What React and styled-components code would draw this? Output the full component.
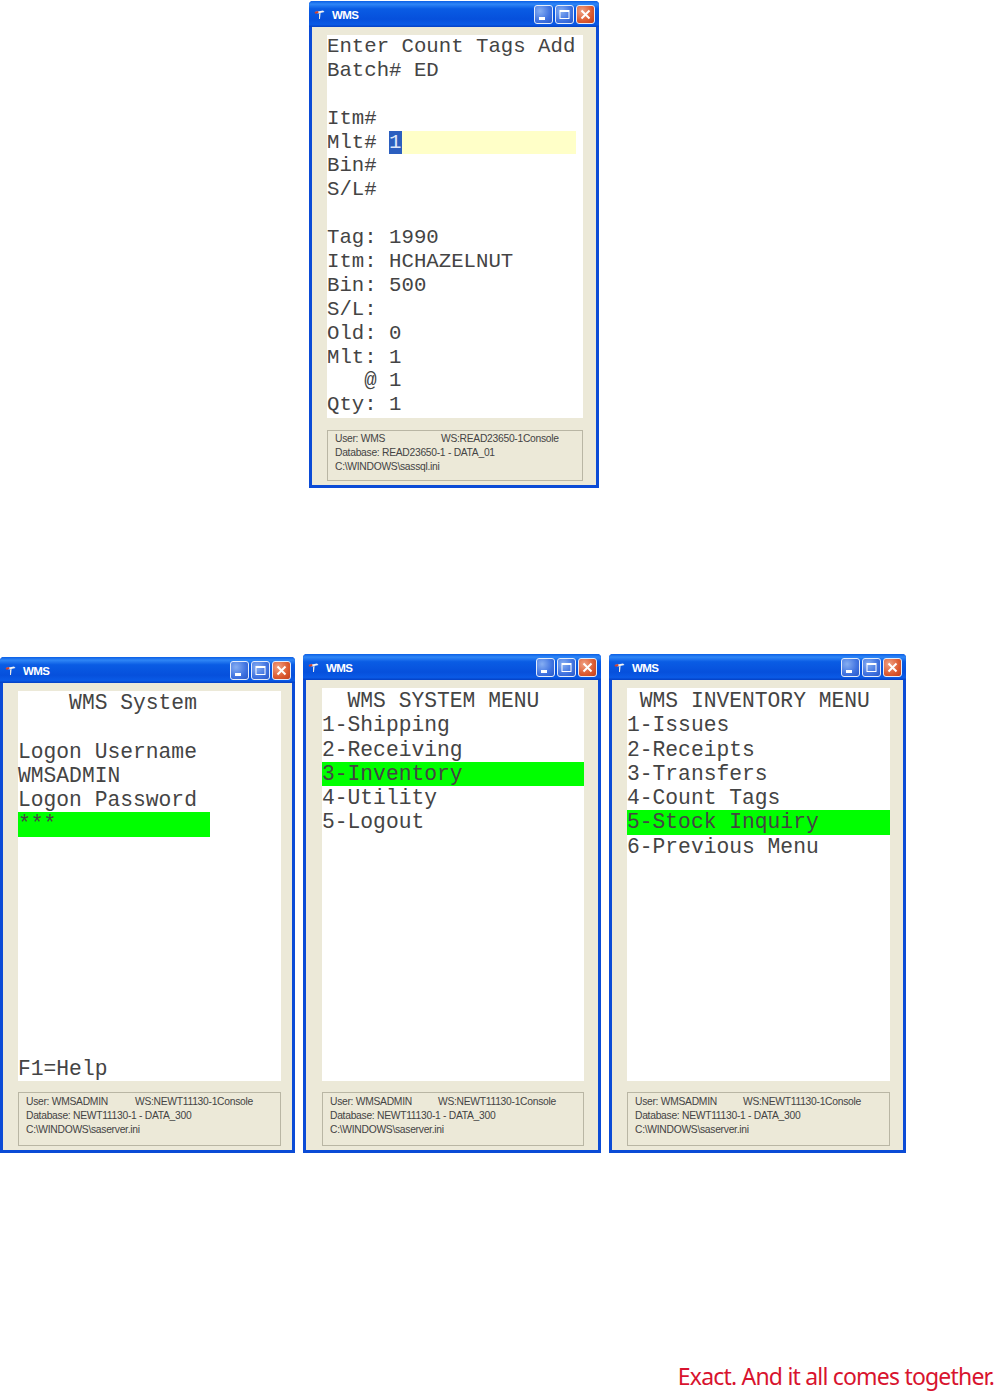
import styled, { createGlobalStyle } from 'styled-components'

const GlobalStyle = createGlobalStyle`
  html, body {
    margin: 0;
    padding: 0;
    background: #fff;
  }
`

const Page = styled.div`
  width: 1007px;
  height: 1397px;
  overflow: hidden;
  padding-top: 1px;
  box-sizing: border-box;
`

const TopRow = styled.div`
  padding-left: 309px;
`

const BottomRow = styled.div`
  display: flex;
  align-items: flex-end;
  gap: 8px;
  margin-top: 166px;
`

const Win = styled.section`
  box-sizing: border-box;
  width: ${({ $width }) => $width}px;
  display: flex;
  flex-direction: column;
  background: #ece9d8;
  border: 3px solid #0b4bd6;
  border-top: none;
  border-radius: 4px 4px 0 0;
`

const TitleBar = styled.header`
  height: 26px;
  margin: 0 -3px;
  display: flex;
  align-items: center;
  padding: 0 4px 0 4px;
  border-radius: 4px 4px 0 0;
  background: linear-gradient(180deg, #0a5fe6 0%, #2f86f6 12%, #0a5ce4 30%, #0650dc 70%, #0a5ae6 90%, #0440c4 100%);
`

const TitleIcon = styled.svg`
  width: 13px;
  height: 13px;
  margin-right: 6px;
  flex: none;
`

const TitleText = styled.span`
  flex: 1;
  font: bold 11.5px 'Liberation Sans', Arial, sans-serif;
  letter-spacing: -0.6px;
  color: #fff;
  padding-top: 2px;
`

const Ctl = styled.button`
  width: 19px;
  height: 19px;
  margin-left: 2px;
  padding: 0;
  display: flex;
  align-items: center;
  justify-content: center;
  box-sizing: border-box;
  border: 1px solid #e4ecfb;
  border-radius: 3px;
  background: ${({ $close }) =>
    $close
      ? 'radial-gradient(circle at 30% 30%, #f0a184, #dc5a30 60%, #c23e1c)'
      : 'radial-gradient(circle at 30% 30%, #86aef2, #3f72e0 60%, #2a58c8)'};
`

const Client = styled.div`
  display: flex;
  flex-direction: column;
  padding: 8px ${({ $padRight }) => $padRight}px 4px ${({ $padLeft }) => $padLeft}px;
`

const Screen = styled.div`
  box-sizing: border-box;
  height: ${({ $height }) => $height}px;
  padding-top: ${({ $padTop }) => $padTop}px;
  background: #fff;
  display: flex;
  flex-direction: column;
  font-family: 'Liberation Mono', 'Courier New', monospace;
  font-size: ${({ $size }) => $size}px;
  color: #444;
`

const Line = styled.div`
  height: ${({ $lh }) => $lh}px;
  line-height: ${({ $lh }) => $lh}px;
  white-space: pre;
  display: flex;
  flex: none;
  width: ${({ $hlWidth }) => ($hlWidth ? `${$hlWidth}px` : 'auto')};
  background: ${({ $hl }) => ($hl ? '#00ff00' : 'transparent')};
`

const PushDown = styled.div`
  flex: 1;
`

const InputField = styled.span`
  flex: 1;
  margin-right: 7px;
  background: #ffffc8;
  display: flex;
`

const Selected = styled.span`
  background: #2b5fbf;
  color: #dce6f8;
`

const Status = styled.div`
  box-sizing: border-box;
  height: ${({ $height }) => $height}px;
  margin-top: ${({ $gap }) => $gap}px;
  padding: ${({ $padTop }) => $padTop}px 7px 0;
  border: 1px solid #b9b6a4;
  font: 10.3px/14px 'Liberation Sans', Arial, sans-serif;
  letter-spacing: -0.28px;
  color: #444;
`

const StatusRow = styled.div`
  display: flex;
  white-space: pre;
`

const UserCol = styled.span`
  width: ${({ $width }) => $width}px;
  flex: none;
`

const Tagline = styled.div`
  margin-top: 208px;
  padding-right: 13px;
  text-align: right;
  font: 400 23px/30px 'Noto Sans', sans-serif;
  letter-spacing: -0.8px;
  color: #d8132e;
`

const AppIcon = () => (
  <TitleIcon viewBox="0 0 13 13">
    <path d="M2 4 L10 2.5 L11.5 4 L5 5.5 Z" fill="#f4f4f4" />
    <path d="M1.5 4 L5 3 L5.5 5 L2.5 5.8 Z" fill="#d8402a" />
    <path d="M6 5.5 L7.6 5 L7 11 L6 11 Z" fill="#e8e8e8" />
  </TitleIcon>
)

const WinControls = () => (
  <>
    <Ctl aria-label="Minimize">
      <svg width="13" height="13" viewBox="0 0 13 13">
        <rect x="2" y="9" width="6" height="3" fill="#fff" />
      </svg>
    </Ctl>
    <Ctl aria-label="Maximize">
      <svg width="13" height="13" viewBox="0 0 13 13">
        <rect x="2" y="2.5" width="9" height="8" fill="none" stroke="#fff" strokeWidth="1" />
        <rect x="2" y="2" width="9" height="2" fill="#fff" />
      </svg>
    </Ctl>
    <Ctl $close aria-label="Close">
      <svg width="13" height="13" viewBox="0 0 13 13">
        <path d="M2.5 2.5 L10.5 10.5 M10.5 2.5 L2.5 10.5" stroke="#fff" strokeWidth="2" />
      </svg>
    </Ctl>
  </>
)

const WmsWindow = ({ width, padLeft = 15, padRight = 14, screenHeight, screenPadTop = 1, size, lineHeight, statusHeight, statusGap = 11, statusPadTop = 2, status, userCol, children }) => (
  <Win $width={width}>
    <TitleBar>
      <AppIcon />
      <TitleText>WMS</TitleText>
      <WinControls />
    </TitleBar>
    <Client $padLeft={padLeft} $padRight={padRight}>
      <Screen $height={screenHeight} $padTop={screenPadTop} $size={size}>
        {children(lineHeight)}
      </Screen>
      <Status $height={statusHeight} $gap={statusGap} $padTop={statusPadTop}>
        <StatusRow>
          <UserCol $width={userCol}>{status[0]}</UserCol>
          <span>{status[1]}</span>
        </StatusRow>
        <div>{status[2]}</div>
        <div>{status[3]}</div>
      </Status>
    </Client>
  </Win>
)

const MenuLines = ({ lines, active, lh }) =>
  lines.map((text, i) => (
    <Line key={i} $lh={lh} $hl={i === active}>
      {text}
    </Line>
  ))

const countTagLines = [
  'Enter Count Tags Add',
  'Batch# ED',
  ' ',
  'Itm#',
]
const countTagTail = ['Bin#', 'S/L#', ' ', 'Tag: 1990', 'Itm: HCHAZELNUT', 'Bin: 500', 'S/L:', 'Old: 0', 'Mlt: 1', '   @ 1', 'Qty: 1']

export default function App() {
  return (
    <Page>
      <GlobalStyle />
      <TopRow>
        <WmsWindow
          width={290}
          padRight={13}
          screenHeight={383}
          screenPadTop={0}
          size={20.7}
          lineHeight={23.9}
          statusHeight={51}
          statusGap={12}
          statusPadTop={1}
          userCol={106}
          status={['User: WMS', 'WS:READ23650-1Console', 'Database: READ23650-1 - DATA_01', 'C:\\WINDOWS\\sassql.ini']}
        >
          {(lh) => (
            <>
              {countTagLines.map((t, i) => (
                <Line key={i} $lh={lh}>{t}</Line>
              ))}
              <Line $lh={lh}>
                {'Mlt# '}
                <InputField>
                  <Selected>1</Selected>
                </InputField>
              </Line>
              {countTagTail.map((t, i) => (
                <Line key={i} $lh={lh}>{t}</Line>
              ))}
            </>
          )}
        </WmsWindow>
      </TopRow>
      <BottomRow>
        <WmsWindow
          width={295}
          padRight={11}
          screenHeight={390}
          screenPadTop={0}
          size={21.3}
          lineHeight={24.3}
          statusHeight={54}
          userCol={109}
          status={['User: WMSADMIN', 'WS:NEWT11130-1Console', 'Database: NEWT11130-1 - DATA_300', 'C:\\WINDOWS\\saserver.ini']}
        >
          {(lh) => (
            <>
              <Line $lh={lh}>{'    WMS System'}</Line>
              <Line $lh={lh}>{' '}</Line>
              <Line $lh={lh}>Logon Username</Line>
              <Line $lh={lh}>WMSADMIN</Line>
              <Line $lh={lh}>Logon Password</Line>
              <Line $lh={lh} $hl $hlWidth={192}>***</Line>
              <PushDown />
              <Line $lh={lh}>F1=Help</Line>
            </>
          )}
        </WmsWindow>
        <WmsWindow
          width={298}
          padLeft={16}
          padRight={14}
          screenHeight={393}
          size={21.3}
          lineHeight={24.3}
          statusHeight={54}
          userCol={108}
          status={['User: WMSADMIN', 'WS:NEWT11130-1Console', 'Database: NEWT11130-1 - DATA_300', 'C:\\WINDOWS\\saserver.ini']}
        >
          {(lh) => (
            <MenuLines
              lh={lh}
              active={3}
              lines={['  WMS SYSTEM MENU', '1-Shipping', '2-Receiving', '3-Inventory', '4-Utility', '5-Logout']}
            />
          )}
        </WmsWindow>
        <WmsWindow
          width={297}
          padRight={13}
          screenHeight={393}
          size={21.3}
          lineHeight={24.3}
          statusHeight={54}
          userCol={108}
          status={['User: WMSADMIN', 'WS:NEWT11130-1Console', 'Database: NEWT11130-1 - DATA_300', 'C:\\WINDOWS\\saserver.ini']}
        >
          {(lh) => (
            <MenuLines
              lh={lh}
              active={5}
              lines={[' WMS INVENTORY MENU', '1-Issues', '2-Receipts', '3-Transfers', '4-Count Tags', '5-Stock Inquiry', '6-Previous Menu']}
            />
          )}
        </WmsWindow>
      </BottomRow>
      <Tagline>Exact. And it all comes together.</Tagline>
    </Page>
  )
}
